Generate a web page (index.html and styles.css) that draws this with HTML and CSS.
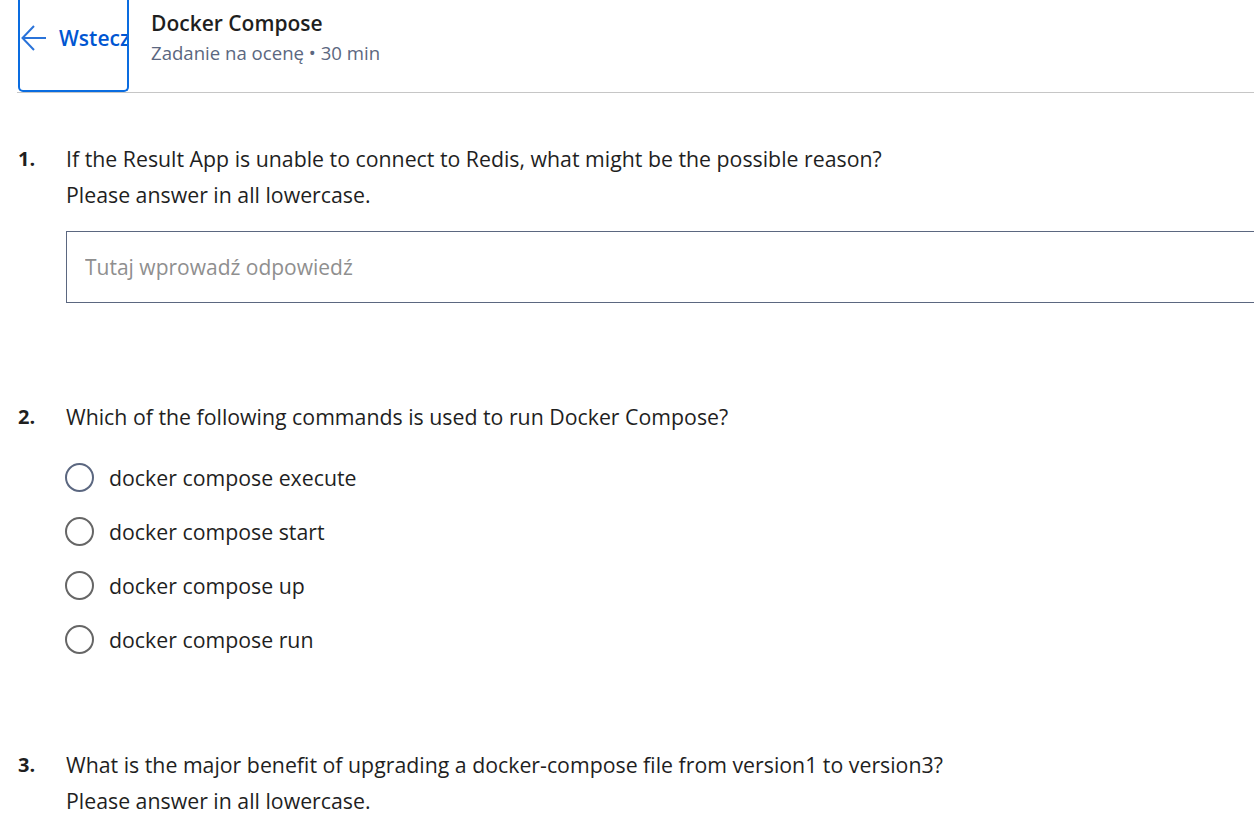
FILE: index.html
```html
<!DOCTYPE html>
<html lang="pl">
<head>
<meta charset="utf-8">
<title>Docker Compose</title>
<link rel="stylesheet" href="styles.css">
</head>
<body>
<div class="page">
  <header class="header">
    <button class="back" type="button">
      <svg class="back-icon" width="26" height="26" viewBox="0 0 26 26" fill="none" stroke="currentColor" stroke-width="2">
        <path d="M25 13H2"/>
        <path d="M13 1L1.5 13L13 25"/>
      </svg>
      <span class="back-label">Wstecz</span>
    </button>
    <div class="titles">
      <h1 class="title">Docker Compose</h1>
      <div class="subtitle">Zadanie na ocenę • 30 min</div>
    </div>
  </header>

  <main class="questions">
    <section class="question q1">
      <div class="num">1.</div>
      <div class="body">
        <p class="prompt">If the Result App is unable to connect to Redis, what might be the possible reason?</p>
        <p class="prompt">Please answer in all lowercase.</p>
        <input class="answer" type="text" placeholder="Tutaj wprowadź odpowiedź">
      </div>
    </section>

    <section class="question q2">
      <div class="num">2.</div>
      <div class="body">
        <p class="prompt">Which of the following commands is used to run Docker Compose?</p>
        <div class="options">
          <label class="option"><span class="radio first"></span><span class="opt-text">docker compose execute</span></label>
          <label class="option"><span class="radio"></span><span class="opt-text">docker compose start</span></label>
          <label class="option"><span class="radio"></span><span class="opt-text">docker compose up</span></label>
          <label class="option"><span class="radio"></span><span class="opt-text">docker compose run</span></label>
        </div>
      </div>
    </section>

    <section class="question q3">
      <div class="num">3.</div>
      <div class="body">
        <p class="prompt">What is the major benefit of upgrading a docker-compose file from version1 to version3?</p>
        <p class="prompt">Please answer in all lowercase.</p>
      </div>
    </section>
  </main>
</div>
</body>
</html>
```

FILE: styles.css
```css
html, body {
  margin: 0;
  padding: 0;
  overflow: hidden;
  background: #ffffff;
}

body {
  font-family: "Open Sans", "Noto Sans", "Liberation Sans", sans-serif;
  color: #1f1f1f;
}

.page {
  padding-left: 17px;
}

.header {
  display: flex;
  align-items: stretch;
  height: 92px;
  border-bottom: 1px solid #c6c6c6;
}

.back {
  display: flex;
  align-items: center;
  width: 111px;
  height: 92px;
  margin: 0 0 0 1px;
  padding: 0 0 0 1px;
  box-sizing: border-box;
  border: 2px solid #0a6ce0;
  border-top: 0;
  border-radius: 0 0 5px 5px;
  background: #ffffff;
  color: #0056d2;
  overflow: hidden;
  font: inherit;
  cursor: pointer;
}

.back-icon {
  flex: none;
  margin-top: -14px;
  color: #2a73d9;
}

.back-label {
  flex: none;
  margin-top: -15px;
  margin-left: 12px;
  font-size: 21px;
  font-weight: 600;
  color: #0056d2;
  white-space: nowrap;
}

.titles {
  margin-left: 22px;
  padding-top: 8px;
}

.title {
  margin: 0;
  font-size: 21px;
  font-weight: 600;
  line-height: 30px;
  color: #1f1f1f;
}

.subtitle {
  margin-top: 0;
  font-size: 18.6px;
  line-height: 30px;
  color: #5b6780;
}

.questions {
  padding-top: 48px;
}

.question {
  display: grid;
  grid-template-columns: 49px 1fr;
}

.num {
  font-size: 20px;
  font-weight: 700;
  line-height: 36px;
  padding-left: 1px;
}

.prompt {
  margin: 0;
  font-size: 21.3px;
  line-height: 36px;
  white-space: nowrap;
}

.answer {
  display: block;
  box-sizing: border-box;
  width: 1300px;
  height: 72px;
  margin-top: 18px;
  padding: 0 18px;
  border: 1px solid #5b6780;
  border-radius: 0;
  font: inherit;
  font-size: 21px;
  color: #1f1f1f;
  outline: none;
}

.answer::placeholder {
  color: #8f8f8f;
}

.q2 {
  margin-top: 96px;
}

.options {
  margin-top: 15px;
}

.option {
  display: flex;
  align-items: center;
  height: 54px;
}

.radio {
  flex: none;
  box-sizing: border-box;
  width: 29px;
  height: 29px;
  margin-left: -1px;
  border: 2px solid #666666;
  border-radius: 50%;
}

.radio.first {
  border-color: #5b6780;
}

.opt-text {
  margin-left: 15px;
  font-size: 21.3px;
}

.q3 {
  margin-top: 81px;
}
```
